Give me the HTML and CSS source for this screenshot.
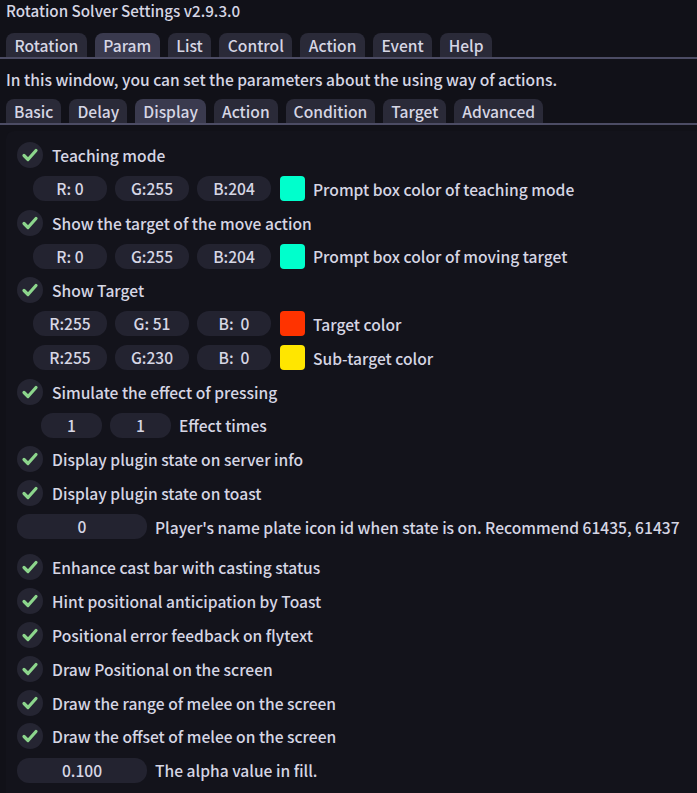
FILE: index.html
```html
<!DOCTYPE html>
<html>
<head>
<meta charset="utf-8">
<link rel="stylesheet" href="styles.css">
</head>
<body>
<div class="window">
  <div class="title">Rotation Solver Settings v2.9.3.0</div>
  <div class="tabbar top">
    <div class="tab">Rotation</div>
    <div class="tab active">Param</div>
    <div class="tab">List</div>
    <div class="tab">Control</div>
    <div class="tab">Action</div>
    <div class="tab">Event</div>
    <div class="tab">Help</div>
  </div>
  <div class="desc">In this window, you can set the parameters about the using way of actions.</div>
  <div class="tabbar sub">
    <div class="tab">Basic</div>
    <div class="tab">Delay</div>
    <div class="tab active">Display</div>
    <div class="tab">Action</div>
    <div class="tab">Condition</div>
    <div class="tab">Target</div>
    <div class="tab">Advanced</div>
  </div>
  <div class="child">
    <div class="row check"><span class="cb"><svg viewBox="0 0 26 26"><path d="M7 13.5 L11 17.5 L19 8.5"/></svg></span><span>Teaching mode</span></div>
    <div class="row indent1"><span class="pill c">R: 0</span><span class="pill c">G:255</span><span class="pill c">B:204</span><span class="sw teal"></span><span>Prompt box color of teaching mode</span></div>
    <div class="row check"><span class="cb"><svg viewBox="0 0 26 26"><path d="M7 13.5 L11 17.5 L19 8.5"/></svg></span><span>Show the target of the move action</span></div>
    <div class="row indent1"><span class="pill c">R: 0</span><span class="pill c">G:255</span><span class="pill c">B:204</span><span class="sw teal"></span><span>Prompt box color of moving target</span></div>
    <div class="row check"><span class="cb"><svg viewBox="0 0 26 26"><path d="M7 13.5 L11 17.5 L19 8.5"/></svg></span><span>Show Target</span></div>
    <div class="row indent1"><span class="pill c">R:255</span><span class="pill c">G: 51</span><span class="pill c">B:  0</span><span class="sw red"></span><span>Target color</span></div>
    <div class="row indent1"><span class="pill c">R:255</span><span class="pill c">G:230</span><span class="pill c">B:  0</span><span class="sw yellow"></span><span>Sub-target color</span></div>
    <div class="row check"><span class="cb"><svg viewBox="0 0 26 26"><path d="M7 13.5 L11 17.5 L19 8.5"/></svg></span><span>Simulate the effect of pressing</span></div>
    <div class="row indent2"><span class="pill e">1</span><span class="pill e">1</span><span>Effect times</span></div>
    <div class="row check"><span class="cb"><svg viewBox="0 0 26 26"><path d="M7 13.5 L11 17.5 L19 8.5"/></svg></span><span>Display plugin state on server info</span></div>
    <div class="row check"><span class="cb"><svg viewBox="0 0 26 26"><path d="M7 13.5 L11 17.5 L19 8.5"/></svg></span><span>Display plugin state on toast</span></div>
    <div class="row"><span class="pill w">0</span><span>Player's name plate icon id when state is on. Recommend 61435, 61437</span></div>
    <div class="spacer"></div>
    <div class="row check"><span class="cb"><svg viewBox="0 0 26 26"><path d="M7 13.5 L11 17.5 L19 8.5"/></svg></span><span>Enhance cast bar with casting status</span></div>
    <div class="row check"><span class="cb"><svg viewBox="0 0 26 26"><path d="M7 13.5 L11 17.5 L19 8.5"/></svg></span><span>Hint positional anticipation by Toast</span></div>
    <div class="row check"><span class="cb"><svg viewBox="0 0 26 26"><path d="M7 13.5 L11 17.5 L19 8.5"/></svg></span><span>Positional error feedback on flytext</span></div>
    <div class="row check"><span class="cb"><svg viewBox="0 0 26 26"><path d="M7 13.5 L11 17.5 L19 8.5"/></svg></span><span>Draw Positional on the screen</span></div>
    <div class="row check"><span class="cb"><svg viewBox="0 0 26 26"><path d="M7 13.5 L11 17.5 L19 8.5"/></svg></span><span>Draw the range of melee on the screen</span></div>
    <div class="row check"><span class="cb"><svg viewBox="0 0 26 26"><path d="M7 13.5 L11 17.5 L19 8.5"/></svg></span><span>Draw the offset of melee on the screen</span></div>
    <div class="row"><span class="pill w">0.100</span><span>The alpha value in fill.</span></div>
  </div>
</div>
</body>
</html>
```
FILE: styles.css
```css
html, body {
  margin: 0;
  padding: 0;
  background: #111118;
  width: 697px;
  height: 793px;
  overflow: hidden;
}
.window {
  font-family: "Noto Sans CJK JP", "Noto Sans", sans-serif;
  font-weight: 500;
  font-size: 15.6px;
  color: #d6d6e4;
  padding: 0 0 0 6px;
  display: flex;
  flex-direction: column;
  height: 793px;
  box-sizing: border-box;
}
.title {
  height: 21px;
  line-height: 21px;
  margin-bottom: 12px;
  font-size: 15.2px;
}
.tabbar {
  display: flex;
  gap: 8px;
  height: 24px;
  border-bottom: 2px solid #4c4c64;
  margin-left: -6px;
  padding-left: 6px;
}
.tab {
  background: #2a2a38;
  border-radius: 8px 8px 0 0;
  padding: 0 8.5px;
  line-height: 25px;
  height: 24px;
}
.sub .tab {
  padding: 0 8px;
}
.tab.active {
  background: #3a3a4e;
}
.desc {
  height: 40px;
  line-height: 40px;
}
.child {
  margin-top: 6px;
  border-radius: 8px 0 0 0;
  background: #13131b;
  padding: 11px 0 0 11px;
  display: flex;
  flex-direction: column;
  gap: 7.8px;
  flex: 1;
  min-height: 0;
}
.row {
  display: flex;
  align-items: center;
  height: 26px;
  gap: 8px;
  white-space: pre;
  flex: none;
}
.row.check { gap: 9px; }
.indent1 { padding-left: 16px; }
.indent2 { padding-left: 24px; }
.spacer { height: 0; margin-top: -1px; flex: none; }
.cb {
  width: 26px;
  height: 26px;
  border-radius: 50%;
  background: #252532;
  display: flex;
}
.cb svg {
  width: 26px;
  height: 26px;
}
.cb path {
  fill: none;
  stroke: #8cd68c;
  stroke-width: 3.2;
  stroke-linecap: round;
  stroke-linejoin: round;
}
.pill {
  height: 25px;
  line-height: 25px;
  border-radius: 12px;
  background: #232330;
  text-align: center;
  flex: none;
}
.pill.c { width: 74px; }
.pill.e { width: 61px; }
.pill.w { width: 130px; }
.sw {
  width: 25px;
  height: 25px;
  border-radius: 4px;
  margin-left: 1px;
  flex: none;
}
.teal { background: #00ffcc; }
.red { background: #ff3300; }
.yellow { background: #ffe600; }
```
